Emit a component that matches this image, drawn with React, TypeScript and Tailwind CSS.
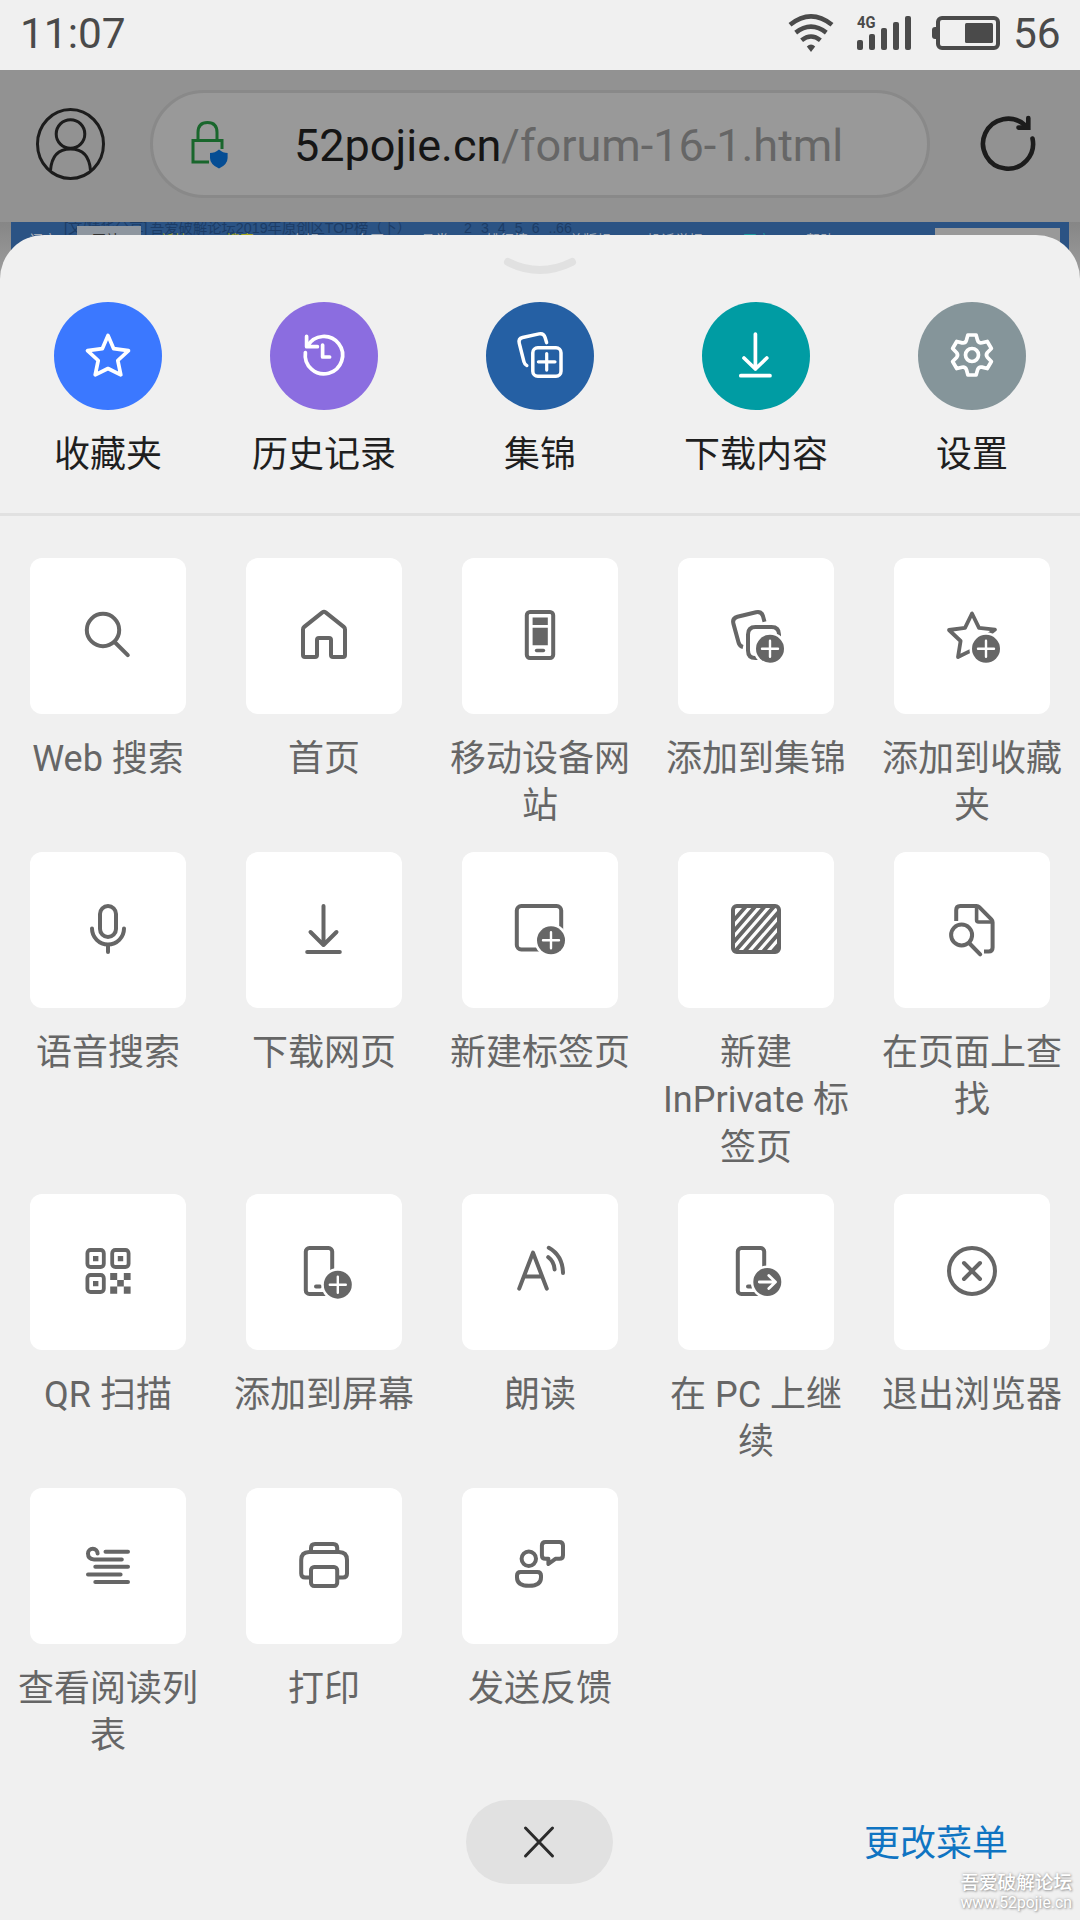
import type { ReactNode } from "react";

type Item = { label: string; icon: ReactNode };

function Glyph({ children, width = 4 }: { children: ReactNode; width?: number }) {
  return (
    <svg
      width="60"
      height="60"
      viewBox="0 0 60 60"
      fill="none"
      stroke="currentColor"
      strokeWidth={width}
      strokeLinecap="round"
      strokeLinejoin="round"
    >
      {children}
    </svg>
  );
}

// Filled round badge in the lower right corner of an icon, with a white halo.
function Badge({ cx, cy, arrow = false }: { cx: number; cy: number; arrow?: boolean }) {
  return (
    <g>
      <circle cx={cx} cy={cy} r="16.6" fill="#fff" stroke="none" />
      <circle cx={cx} cy={cy} r="14" fill="currentColor" stroke="none" />
      <path
        d={
          arrow
            ? `M${cx - 8} ${cy}h16M${cx + 1.5} ${cy - 6.5}l6.7 6.5l-6.7 6.5`
            : `M${cx - 8} ${cy}h16M${cx} ${cy - 8}v16`
        }
        stroke="#fff"
        strokeWidth={arrow ? 2.8 : 2.4}
      />
    </g>
  );
}

function gearPath() {
  const points: Array<[number, number]> = [
    [-4.1, -20],
    [4.1, -20],
    [5.6, -14.6],
    [6.7, -11.6],
    [9.9, -12.2],
  ];
  let d = "";
  for (let i = 0; i < 6; i++) {
    const a = (i * Math.PI) / 3;
    const p = points.map(([x, y]) => {
      const px = 30 + x * Math.cos(a) - y * Math.sin(a);
      const py = 29 + x * Math.sin(a) + y * Math.cos(a);
      return `${px.toFixed(2)} ${py.toFixed(2)}`;
    });
    d += `${i ? "L" : "M"}${p[0]}L${p[1]}L${p[2]}Q${p[3]} ${p[4]}`;
  }
  return d + "Z";
}

const shortcuts: Array<Item & { color: string }> = [
  {
    label: "收藏夹",
    color: "bg-[#3b78ff]",
    icon: (
      <Glyph width={3.7}>
        <path d="M30 9.5L35.7 22.7L50.5 24.7L39.8 34.5L42.8 48.8L30 42.5L17.2 48.8L20.2 34.5L9.5 24.7L24.3 22.7Z" />
      </Glyph>
    ),
  },
  {
    label: "历史记录",
    color: "bg-[#8b6de0]",
    icon: (
      <Glyph width={3.7}>
        <path d="M11.4 26.5A18.7 18.7 0 1 0 13.6 20" />
        <path d="M12.6 10.4V20.7H23.4" />
        <path d="M28.6 19V31H35.6" />
      </Glyph>
    ),
  },
  {
    label: "集锦",
    color: "bg-[#2560a4]",
    icon: (
      <Glyph width={3.5}>
        <rect x="22.8" y="21.7" width="28.2" height="28.6" rx="5" />
        <path d="M36.7 27.5v16.6M28.4 35.8h16.6" strokeWidth="3.2" />
        <path d="M16.8 39.5q-2.2-1-2.9-3.8L9.3 17.4q-1.2-4.7 3.3-5.9L29 7.9q4.6-1 6 3.3l1.6 5.4" />
      </Glyph>
    ),
  },
  {
    label: "下载内容",
    color: "bg-[#009ca3]",
    icon: (
      <Glyph width={3.7}>
        <path d="M29.4 8V43M18 32L29.4 43L40.8 32M14.8 49.7H44" />
      </Glyph>
    ),
  },
  {
    label: "设置",
    color: "bg-[#85959a]",
    icon: (
      <Glyph width={3.7}>
        <path d={gearPath()} />
        <circle cx="30" cy="29" r="6.5" />
      </Glyph>
    ),
  },
];

const phone = (
  <>
    <rect x="11.8" y="6" width="26.4" height="46" rx="3.6" />
    <path d="M22 44.6h4" />
  </>
);

const menuRows: Item[][] = [
  [
    {
      label: "Web 搜索",
      icon: (
        <Glyph>
          <circle cx="25" cy="24" r="16.2" />
          <path d="M36.6 36L49.8 49.2" />
        </Glyph>
      ),
    },
    {
      label: "首页",
      icon: (
        <Glyph>
          <path d="M9 49V23.5q0-1.6 1.2-2.6L28.4 6.4q1.6-1.2 3.2 0L49.8 20.9q1.2 1 1.2 2.6V49q0 2-2 2h-10q-2 0-2-2V34q0-2-2-2H25q-2 0-2 2v15q0 2-2 2h-10q-2 0-2-2z" />
        </Glyph>
      ),
    },
    {
      label: "移动设备网站",
      icon: (
        <Glyph>
          <rect x="16.8" y="6" width="26.4" height="46" rx="3.2" />
          <path d="M22.6 11.6h15.2v7.4H22.6zM22.6 21.8h15.2v17.4H22.6z" fill="currentColor" stroke="none" />
          <path d="M26.6 44.5h6.8" strokeWidth="3.6" />
        </Glyph>
      ),
    },
    {
      label: "添加到集锦",
      icon: (
        <Glyph>
          <path
            d="M17 41q-3.4-.8-4.4-4.4L7.4 17.6q-1.4-5.5 4-6.9L30 6.2q5.4-1.2 7 4l1.5 5.6"
            strokeLinecap="butt"
          />
          <path d="M53 32v-3.5q0-7.5-7.5-7.5H29.5q-7.5 0-7.5 7.5v16q0 7.5 7.5 7.5H33" />
          <Badge cx={44} cy={42.8} />
        </Glyph>
      ),
    },
    {
      label: "添加到收藏夹",
      icon: (
        <Glyph width={3.8}>
          <path d="M46 29L53 23.6L37 21.8L30 7.5L23 21.8L7 24L18.6 35L16 51L31 43.6" />
          <Badge cx={44} cy={42.8} />
        </Glyph>
      ),
    },
  ],
  [
    {
      label: "语音搜索",
      icon: (
        <Glyph>
          <rect x="22" y="6" width="16" height="31" rx="8" />
          <path d="M14 28.5a16 16 0 0 0 32 0" />
          <path d="M30 45V52" />
        </Glyph>
      ),
    },
    {
      label: "下载网页",
      icon: (
        <Glyph>
          <path d="M29.5 6V45M16.5 32L29.5 45L42.5 32M13.2 52H45.8" />
        </Glyph>
      ),
    },
    {
      label: "新建标签页",
      icon: (
        <Glyph>
          <rect x="6.8" y="6" width="44.4" height="43.4" rx="4.5" />
          <Badge cx={41} cy={40.3} />
        </Glyph>
      ),
    },
    {
      label: "新建 InPrivate 标签页",
      icon: (
        <Glyph>
          <clipPath id="hatch-area">
            <rect x="6" y="5" width="48" height="48" rx="4" />
          </clipPath>
          <rect x="7" y="6" width="46" height="46" rx="3.8" />
          <path
            clipPath="url(#hatch-area)"
            strokeWidth="3.9"
            d="M22 4L-18 50M31.4 4L-8.6 50M40.8 4L.8 50M50.2 4L8.5 52M59.6 4L17.9 52M69 4L27.3 52M78.4 4L36.7 52M87.8 4L46.1 52"
          />
        </Glyph>
      ),
    },
    {
      label: "在页面上查找",
      icon: (
        <Glyph>
          <path d="M14.2 21V10q0-4 4-4H34.5q1.6 0 2.8 1.2L49.4 19.4q1.2 1.2 1.2 2.8V47.5q0 4-4 4H42" strokeLinecap="butt" />
          <path d="M34.6 6.5V20q0 2 2 2H50" strokeWidth="3.6" />
          <circle cx="19.6" cy="35" r="10.5" />
          <path d="M27.6 43.5L38.2 54.4" />
        </Glyph>
      ),
    },
  ],
  [
    {
      label: "QR 扫描",
      icon: (
        <Glyph width={3.8}>
          <rect x="9.4" y="8" width="16.4" height="17" rx="3.2" />
          <rect x="34.2" y="8" width="16.4" height="17" rx="3.2" />
          <rect x="9.4" y="33" width="16.4" height="17" rx="3.2" />
          <path
            stroke="none"
            fill="currentColor"
            d="M15 14h5.4v5.2H15zM39.8 14h5.4v5.2h-5.4zM15 39h5.4v5.2H15zM32.2 31h7v7h-7zM45.8 31h6.8v7h-6.8zM39.2 38h6.6v6.6h-6.6zM32.2 44.6h7v7.2h-7zM45.8 44.6h6.8v7.2h-6.8z"
          />
        </Glyph>
      ),
    },
    {
      label: "添加到屏幕",
      icon: (
        <Glyph>
          {phone}
          <Badge cx={43.8} cy={42.7} />
        </Glyph>
      ),
    },
    {
      label: "朗读",
      icon: (
        <Glyph>
          <path d="M9.2 46.6L23 10.6L36.8 46.6M14 34.4H32" />
          <path d="M38.8 5.8Q52.6 13.5 53 31M38.2 15.2Q44 19.4 44.6 27.4" />
        </Glyph>
      ),
    },
    {
      label: "在 PC 上继续",
      icon: (
        <Glyph>
          {phone}
          <Badge cx={41.3} cy={40} arrow />
        </Glyph>
      ),
    },
    {
      label: "退出浏览器",
      icon: (
        <Glyph>
          <circle cx="30" cy="29" r="23" />
          <path d="M22 21L38 37M38 21L22 37" />
        </Glyph>
      ),
    },
  ],
  [
    {
      label: "查看阅读列表",
      icon: (
        <Glyph>
          <path d="M27.5 15.8H50M17.3 30.7H50M10 38.4H42.6M17.3 46H50" />
          <path d="M19.6 17.6a4.8 4.8 0 0 0-9.6 0Q10 23.4 16 23.4H43.8" />
        </Glyph>
      ),
    },
    {
      label: "打印",
      icon: (
        <Glyph>
          <path d="M17 15V12q0-4 4-4H39.2q4 0 4 4V15" />
          <path d="M15.5 41.4H11.2q-4 0-4-4V24q0-8 8-8H45q8 0 8 8V37.4q0 4-4 4H44.5" />
          <rect x="17" y="31" width="26.2" height="19" rx="3.2" />
        </Glyph>
      ),
    },
    {
      label: "发送反馈",
      icon: (
        <Glyph>
          <circle cx="18.8" cy="22.8" r="7.2" />
          <path d="M10.6 36H27.4q3.6 0 3.6 3.6V41.5Q31 49.8 19 49.8T7 41.5V39.6q0-3.6 3.6-3.6z" />
          <path d="M35.5 6H49.4q3.6 0 3.6 3.6V19.2q0 3.6-3.6 3.6H45.4L38.4 28V22.8H35.5q-3.6 0-3.6-3.6V9.6q0-3.6 3.6-3.6z" />
        </Glyph>
      ),
    },
  ],
];

const siteNav = [
  { text: "门户", cls: "w-[63px]" },
  { text: "网站", cls: "w-[68px] text-[#333]" },
  { text: "新帖", cls: "w-[66px] text-[#a5a51c]" },
  { text: "搜索", cls: "w-[65px] text-[#a5a51c]" },
  { text: "专辑", cls: "w-[65px]" },
  { text: "专区", cls: "w-[65px]" },
  { text: "悬赏", cls: "w-[65px]" },
  { text: "排行榜", cls: "w-[83px]" },
  { text: "总版规", cls: "w-[78px]" },
  { text: "投诉举报", cls: "w-[96px]" },
  { text: "开户", cls: "w-[63px] text-[#1d9aa0]" },
  { text: "帮助", cls: "w-[63px]" },
];

function StatusBar() {
  return (
    <header className="flex h-[70px] shrink-0 items-start pl-[20px] pt-[9px] text-[42.4px] leading-[50px] text-[#4a4a4a]">
      <span className="flex-1">11:07</span>
      <svg className="mt-[5px]" width="46" height="40" viewBox="0 0 46 40" fill="none" stroke="#4a4a4a" strokeWidth="4.6">
        <path d="M2 10.8Q23-6 44 10.8M7.7 18.6Q23 6.6 38.3 18.6M13.6 26.2Q23 18.8 32.4 26.2" />
        <path d="M18.8 32.4Q23 28.4 27.2 32.4L23 38Z" fill="#4a4a4a" stroke="none" />
      </svg>
      <svg className="ml-[23px] mt-[7px] overflow-visible" width="56" height="36" viewBox="0 0 56 36" fill="#4a4a4a">
        <text x="0" y="12" fontSize="16.5" fontWeight="700" fontFamily="Roboto, sans-serif" textLength="18.5" lengthAdjust="spacingAndGlyphs">
          4G
        </text>
        <rect x="0" y="24" width="6" height="10" rx="2" />
        <rect x="12" y="18" width="6" height="16" rx="2" />
        <rect x="24" y="12" width="6" height="22" rx="2" />
        <rect x="36" y="6" width="6" height="28" rx="2" />
        <rect x="48" y="0" width="6" height="34" rx="2" />
      </svg>
      <svg className="ml-[19px] mt-[7px]" width="68" height="34" viewBox="0 0 68 34">
        <path d="M4 11H3Q0 11 0 14V20Q0 23 3 23H4Z" fill="#4a4a4a" />
        <rect x="6" y="2" width="60" height="30" rx="4" fill="none" stroke="#4a4a4a" strokeWidth="4" />
        <rect x="33" y="7" width="28" height="20" rx="1.5" fill="#4a4a4a" />
      </svg>
      <span className="ml-[13px] w-[67px]">56</span>
    </header>
  );
}

function AddressBar() {
  return (
    <div className="flex h-[152px] shrink-0 items-center bg-[#929292] pl-[34px]">
      <svg className="-mt-[4px]" width="72" height="76" viewBox="0 0 72 76" fill="none" stroke="#1c1c1c" strokeWidth="3">
        <ellipse cx="36.5" cy="38" rx="33" ry="34.5" />
        <circle cx="36.5" cy="28" r="14.3" />
        <path d="M16.5 64.5Q18 43 36.5 43T56.5 64.5" />
      </svg>
      <div className="-mt-[4px] ml-[44px] flex h-[108px] w-[780px] items-center rounded-full border-[3px] border-[#898989] bg-[#999]">
        <svg className="ml-[36px]" width="42" height="50" viewBox="0 0 42 50" fill="none">
          <path d="M20 43H4V21.5H33V30" stroke="#19662c" strokeWidth="3" />
          <path d="M9 21V13.5Q9 3.5 18.5 3.5T28 13.5V21" stroke="#19662c" strokeWidth="3" />
          <path d="M30 30.5Q34 34 38.6 34V39Q38.6 45.5 30 49.5Q21 45.5 21 39V34Q26 34 30 30.5Z" fill="#054d94" />
        </svg>
        <span className="mt-[3px] ml-[63px] whitespace-nowrap text-[45px] leading-[52px] text-[#666]">
          <span className="text-[#151515]">52pojie.cn</span>/forum-16-1.html
        </span>
      </div>
      <svg className="-mt-[6px] ml-[48px]" width="60" height="60" viewBox="0 0 60 60" fill="none" stroke="#1c1c1c" strokeWidth="4.6" strokeLinecap="round">
        <path d="M54.5 25.5A25 25 0 1 1 47 12.3" />
        <path d="M50.3 5V14.6H40.5" />
      </svg>
    </div>
  );
}

function PageBehind() {
  return (
    <div className="h-[64px] shrink-0 overflow-hidden bg-linear-to-b from-[#868686] to-[#a2a2a2] px-[11px] font-['Liberation_Sans','Noto_Sans_CJK_SC',sans-serif]">
      <div className="relative flex h-full bg-[#2b5384] pl-[18px] pt-[9px] text-[14px] leading-[18px] text-[#a3acb8]">
        <div className="absolute left-[53px] -top-[3px] flex text-[14.3px] leading-[18px] whitespace-pre text-[#1c3c66]">
          <span className="w-[86px]">[文/精华分享]</span>
          <span className="w-[314px]">吾爱破解论坛2019年原创区TOP榜（下）</span>
          <span className="w-[92px] [word-spacing:5px]">2 3 4 5 6 ..</span>
          <span>66</span>
        </div>
        <div className="absolute left-[66px] top-[4px] h-[40px] w-[64px] bg-[#8e969f]" />
        <div className="absolute right-[9px] top-[6px] h-[40px] w-[125px] bg-[#999]" />
        {siteNav.map((entry) => (
          <span key={entry.text} className={`relative shrink-0 ${entry.cls}`}>
            {entry.text}
          </span>
        ))}
      </div>
    </div>
  );
}

export default function App() {
  return (
    <div className="relative flex h-[1920px] w-[1080px] flex-col overflow-hidden bg-[#f0f0f0] font-['Roboto','Noto_Sans_CJK_SC',sans-serif]">
      <StatusBar />
      <AddressBar />
      <PageBehind />

      <main className="relative -mt-[51px] flex flex-1 flex-col rounded-t-[44px] bg-[#f0f0f0]">
        <svg className="mx-auto mt-[19px] shrink-0" width="80" height="24" viewBox="0 0 80 24" fill="none">
          <path d="M8 8Q40 24 72 8" stroke="#e1e1e1" strokeWidth="8" strokeLinecap="round" />
        </svg>

        <nav className="mt-[24px] grid h-[211px] shrink-0 grid-cols-5">
          {shortcuts.map((item) => (
            <div key={item.label} className="flex flex-col items-center">
              <div className={`flex size-[108px] items-center justify-center rounded-full text-white ${item.color}`}>
                {item.icon}
              </div>
              <span className="mt-[22px] text-[36px] leading-[47px] text-[#1f1f1f]">{item.label}</span>
            </div>
          ))}
        </nav>

        <div className="h-[3px] shrink-0 bg-[#e1e1e1]" />

        <section className="mt-[42px] flex flex-col gap-[43.6px]">
          {menuRows.map((row, index) => (
            <div key={index} className="grid grid-cols-5">
              {row.map((item) => (
                <div key={item.label} className="flex flex-col items-center">
                  <div className="flex size-[156px] items-center justify-center rounded-[12px] bg-white text-[#666]">
                    {item.icon}
                  </div>
                  <span className="mt-[22px] -mb-[22px] w-[204px] text-center text-[36px] leading-[47.3px] text-[#666]">
                    {item.label}
                  </span>
                </div>
              ))}
            </div>
          ))}
        </section>

        <footer className="mt-auto mb-[36px] grid h-[84px] grid-cols-3 items-center">
          <div />
          <button className="mr-[2px] flex h-[84px] w-[147px] items-center justify-center justify-self-center rounded-full bg-[#e1e1e1]">
            <svg width="36" height="36" viewBox="0 0 36 36" stroke="#2b2b2b" strokeWidth="3" strokeLinecap="round">
              <path d="M4.5 4L31.5 32M31.5 4L4.5 32" />
            </svg>
          </button>
          <button className="mt-[4px] justify-self-end pr-[72px] text-[36px] leading-[47px] text-[#0f74c2]">更改菜单</button>
        </footer>
      </main>

      <div className="absolute right-[8px] bottom-[7px] text-right text-[18.6px] leading-[20px] whitespace-nowrap text-white [text-shadow:0_0_3px_#999,1px_1px_2px_#aaa]">
        <div className="font-medium">吾爱破解论坛</div>
        <div className="text-[15.8px]">www.52pojie.cn</div>
      </div>
    </div>
  );
}
